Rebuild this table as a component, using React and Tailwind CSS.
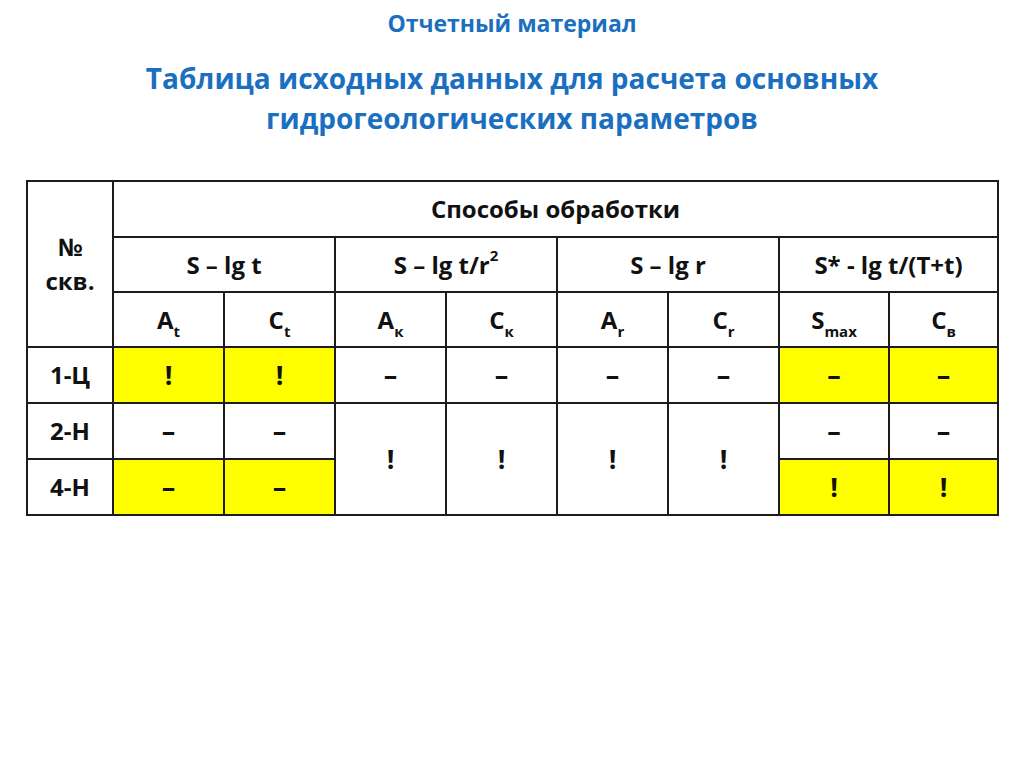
const Y = "bg-[#ffff00]";

const cols = [86, 111, 111, 111, 111, 111, 111, 110, 109];

const Sub = ({ b, s }) => (
  <span>
    {b}
    <sub className="text-[15px] align-[-5px]">{s}</sub>
  </span>
);

const td = "border-2 border-[#1c1c1c] text-center align-middle p-0";
const mark = `${td} text-[27px]`;

export default function App() {
  return (
    <div className="w-[1024px] h-[767px] bg-white font-['Open_Sans',sans-serif] font-bold text-[#111]">
      <div className="pt-[9px] text-center text-[#1b6fc0]">
        <h2 className="text-[23px] leading-[28px]">Отчетный материал</h2>
        <h1 className="mt-[21px] text-[28px] leading-[40px]">
          Таблица исходных данных для расчета основных
          <br />
          гидрогеологических параметров
        </h1>
      </div>
      <table className="ml-[26px] mt-[42px] border-collapse table-fixed text-[24px]">
        <colgroup>
          {cols.map((w, i) => (
            <col key={i} style={{ width: w }} />
          ))}
        </colgroup>
        <tbody>
          <tr className="h-[56px]">
            <td rowSpan={3} className={`${td} leading-[34px]`}>
              №<br />скв.
            </td>
            <td colSpan={8} className={td}>Способы обработки</td>
          </tr>
          <tr className="h-[55px]">
            <td colSpan={2} className={td}>S – lg t</td>
            <td colSpan={2} className={td}>
              S – lg t/r<sup className="text-[15px] align-[5px]">2</sup>
            </td>
            <td colSpan={2} className={td}>S – lg r</td>
            <td colSpan={2} className={td}>S* - lg t/(T+t)</td>
          </tr>
          <tr className="h-[55px]">
            <td className={td}><Sub b="A" s="t" /></td>
            <td className={td}><Sub b="C" s="t" /></td>
            <td className={td}><Sub b="A" s="к" /></td>
            <td className={td}><Sub b="C" s="к" /></td>
            <td className={td}><Sub b="A" s="r" /></td>
            <td className={td}><Sub b="C" s="r" /></td>
            <td className={td}><Sub b="S" s="max" /></td>
            <td className={td}><Sub b="C" s="в" /></td>
          </tr>
          <tr className="h-[56px]">
            <td className={td}>1-Ц</td>
            <td className={`${mark} ${Y}`}>!</td>
            <td className={`${mark} ${Y}`}>!</td>
            <td className={mark}>–</td>
            <td className={mark}>–</td>
            <td className={mark}>–</td>
            <td className={mark}>–</td>
            <td className={`${mark} ${Y}`}>–</td>
            <td className={`${mark} ${Y}`}>–</td>
          </tr>
          <tr className="h-[56px]">
            <td className={td}>2-Н</td>
            <td className={mark}>–</td>
            <td className={mark}>–</td>
            <td rowSpan={2} className={mark}>!</td>
            <td rowSpan={2} className={mark}>!</td>
            <td rowSpan={2} className={mark}>!</td>
            <td rowSpan={2} className={mark}>!</td>
            <td className={mark}>–</td>
            <td className={mark}>–</td>
          </tr>
          <tr className="h-[56px]">
            <td className={td}>4-Н</td>
            <td className={`${mark} ${Y}`}>–</td>
            <td className={`${mark} ${Y}`}>–</td>
            <td className={`${mark} ${Y}`}>!</td>
            <td className={`${mark} ${Y}`}>!</td>
          </tr>
        </tbody>
      </table>
    </div>
  );
}
